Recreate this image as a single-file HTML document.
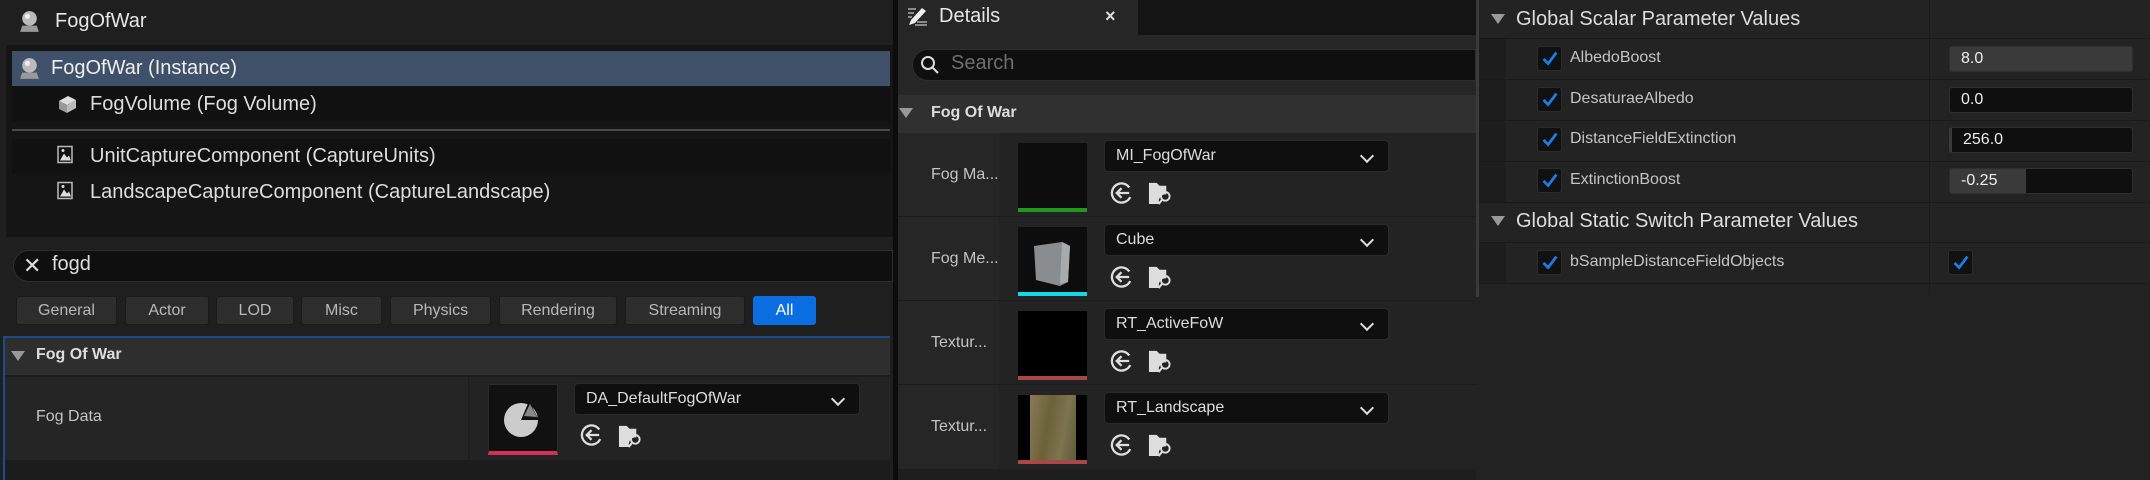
<!DOCTYPE html>
<html><head><meta charset="utf-8"><style>
*{margin:0;padding:0;box-sizing:border-box}
body{width:2150px;height:480px;overflow:hidden;background:#151515;font-family:"Liberation Sans",sans-serif;position:relative;color:#ccc}
.a{position:absolute}
.t{position:absolute;white-space:nowrap}
.btn{position:absolute;top:296px;height:29px;background:#2d2d2d;border:1px solid #1b1b1b;border-radius:3px;color:#b8b8b8;font-size:16px;line-height:27px;text-align:center}
.dd{position:absolute;background:#0f0f0f;border:1px solid #2a2a2a;border-radius:4px;height:32px;color:#ddd;font-size:16px;line-height:30px;padding-left:11px}
.chev{position:absolute;right:16px;top:10px;width:10px;height:10px;border-right:2px solid #ddd;border-bottom:2px solid #ddd;transform:rotate(45deg)}
.cb{position:absolute;width:25px;height:25px;background:#111;border:1px solid #2c2c2c;border-radius:3px}
.lbl{position:absolute;color:#c4c4c4;font-size:16px;white-space:nowrap}
.vb{position:absolute;left:1949px;width:184px;height:26px;background:#0f0f0f;border:1px solid #2f2f2f;border-radius:3px;color:#eee;font-size:16px;line-height:24px;padding-left:11px;overflow:hidden}
</style></head><body>
<svg width="0" height="0" style="position:absolute"><defs>
<symbol id="chk" viewBox="0 0 25 25"><path d="M6 13 L11 18 L20 6" fill="none" stroke="#1a7fe8" stroke-width="3"/></symbol>
<symbol id="arr" viewBox="0 0 24 24"><circle cx="12" cy="12" r="10" fill="none" stroke="#ddd" stroke-width="2.4" stroke-dasharray="52 11" transform="rotate(25 12 12)"/><path d="M20 12H7M12 7L7 12L12 17" fill="none" stroke="#ddd" stroke-width="2.4"/></symbol>
<symbol id="fold" viewBox="0 0 26 26"><path d="M1 3h8l3 3h7v9a7 7 0 0 0-7 10H1z" fill="#ddd"/><circle cx="18" cy="17" r="4.5" fill="none" stroke="#ddd" stroke-width="2"/><path d="M15 20l-4 5" stroke="#ddd" stroke-width="2.2"/></symbol>
<symbol id="pic" viewBox="0 0 16 18"><rect x="1" y="1" width="14" height="16" fill="none" stroke="#bbb" stroke-width="1.5"/><path d="M3 15L7 8L10 12L12 10L14 15Z" fill="#ddd"/><circle cx="6" cy="5" r="1.5" fill="#ddd"/></symbol>
<symbol id="ball" viewBox="0 0 24 24"><circle cx="12" cy="9" r="7" fill="#bbb"/><circle cx="10" cy="7" r="2.5" fill="#eee"/><path d="M3 22L5 16H19L21 22Z" fill="#999"/></symbol>
</defs></svg>

<!-- LEFT PANEL -->
<div class="a" style="left:0;top:0;width:893px;height:480px;background:#1f1f1f"></div>
<svg class="a" style="left:17px;top:9px" width="25" height="25"><use href="#ball"/></svg>
<div class="t" style="left:55px;top:10px;font-size:20px;color:#e6e6e6">FogOfWar</div>
<div class="a" style="left:6px;top:45px;width:887px;height:192px;background:#151515"></div>
<div class="a" style="left:12px;top:51px;width:878px;height:35px;background:#3f5168"></div>
<svg class="a" style="left:17px;top:56px" width="25" height="25"><use href="#ball"/></svg>
<div class="t" style="left:51px;top:57px;font-size:20px;color:#eee">FogOfWar (Instance)</div>
<div class="a" style="left:12px;top:87px;width:878px;height:35px;background:#111"></div>
<svg class="a" style="left:56px;top:93px" width="22" height="22" viewBox="0 0 22 22"><path d="M3 8L12 3L20 7L11 12Z" fill="#ddd"/><path d="M3 8L11 12V20L3 16Z" fill="#999"/><path d="M11 12L20 7V15L11 20Z" fill="#bbb"/></svg>
<div class="t" style="left:90px;top:93px;font-size:20px;color:#ddd">FogVolume (Fog Volume)</div>
<div class="a" style="left:12px;top:129px;width:878px;height:2px;background:#4a4a4a"></div>
<div class="a" style="left:12px;top:139px;width:878px;height:35px;background:#111"></div>
<svg class="a" style="left:57px;top:145px" width="16" height="19"><use href="#pic"/></svg>
<div class="t" style="left:90px;top:145px;font-size:20px;color:#ddd">UnitCaptureComponent (CaptureUnits)</div>
<svg class="a" style="left:57px;top:181px" width="16" height="19"><use href="#pic"/></svg>
<div class="t" style="left:90px;top:181px;font-size:20px;color:#ddd">LandscapeCaptureComponent (CaptureLandscape)</div>

<div class="a" style="left:13px;top:250px;width:880px;height:32px;background:#0f0f0f;border:1px solid #2e2e2e;border-radius:16px 0 0 16px"></div>
<div class="t" style="left:23px;top:253px;font-size:22px;color:#ddd">✕</div>
<div class="t" style="left:52px;top:253px;font-size:20px;color:#ddd">fogd</div>

<div class="btn" style="left:16px;width:101px">General</div>
<div class="btn" style="left:125px;width:84px">Actor</div>
<div class="btn" style="left:216px;width:78px">LOD</div>
<div class="btn" style="left:301px;width:81px">Misc</div>
<div class="btn" style="left:390px;width:101px">Physics</div>
<div class="btn" style="left:499px;width:118px">Rendering</div>
<div class="btn" style="left:625px;width:120px">Streaming</div>
<div class="btn" style="left:753px;width:63px;background:#0a6ee0;color:#fff;border-color:#0a6ee0">All</div>

<div class="a" style="left:3px;top:336px;width:887px;height:144px;border-left:2px solid #1c4d8a;border-top:2px solid #1c4d8a;background:#1c1c1c"></div>
<div class="a" style="left:5px;top:338px;width:885px;height:37px;background:#2e2e2e"></div>
<div class="a" style="left:11px;top:351px;width:0;height:0;border-left:7px solid transparent;border-right:7px solid transparent;border-top:10px solid #999"></div>
<div class="t" style="left:36px;top:346px;font-size:16px;font-weight:bold;color:#ddd">Fog Of War</div>
<div class="a" style="left:5px;top:377px;width:463px;height:83px;background:#252525"></div>
<div class="a" style="left:469px;top:377px;width:421px;height:83px;background:#232323"></div>
<div class="lbl" style="left:36px;top:408px">Fog Data</div>
<div class="a" style="left:488px;top:384px;width:70px;height:71px;background:#111;border:1px solid #2a2a2a;border-bottom:4px solid #d0305a"></div>
<svg class="a" style="left:501px;top:396px" width="44" height="44" viewBox="0 0 44 44"><circle cx="20" cy="24" r="17" fill="#ccc"/><path d="M20 24L28 5L38 24Z" fill="#111"/><path d="M23 20L29 8L36 21Z" fill="#888"/></svg>
<div class="dd" style="left:574px;top:383px;width:286px">DA_DefaultFogOfWar<div class="chev"></div></div>
<svg class="a" style="left:580px;top:423px" width="23" height="24"><use href="#arr"/></svg>
<svg class="a" style="left:618px;top:423px" width="25" height="25"><use href="#fold"/></svg>

<!-- MIDDLE PANEL -->
<div class="a" style="left:893px;top:0;width:5px;height:480px;background:#0c0c0c"></div>
<div class="a" style="left:898px;top:0;width:580px;height:480px;background:#222"></div>
<div class="a" style="left:1138px;top:0;width:340px;height:35px;background:#141414"></div>
<div class="a" style="left:898px;top:0;width:240px;height:35px;background:#262626"></div>
<svg class="a" style="left:905px;top:5px" width="24" height="24" viewBox="0 0 24 24"><path d="M3 4h8M3 8h6M3 12h4M10 20h12M12 17h10" stroke="#aaa" stroke-width="1.5"/><path d="M4 20L6 15L17 3L21 6L10 18Z" fill="#eee"/></svg>
<div class="t" style="left:939px;top:5px;font-size:20px;color:#e6e6e6">Details</div>
<div class="t" style="left:1105px;top:6px;font-size:18px;color:#ddd;font-weight:bold">×</div>
<div class="a" style="left:898px;top:35px;width:578px;height:434px;background:#262626"></div>
<div class="a" style="left:912px;top:49px;width:564px;height:32px;background:#0f0f0f;border:1px solid #2e2e2e;border-radius:16px 0 0 16px"></div>
<svg class="a" style="left:920px;top:55px" width="20" height="21" viewBox="0 0 20 21"><circle cx="8" cy="8" r="6" fill="none" stroke="#ddd" stroke-width="2"/><path d="M12.5 12.5L18 18" stroke="#ddd" stroke-width="2"/></svg>
<div class="t" style="left:951px;top:52px;font-size:20px;color:#6e6e6e">Search</div>
<div class="a" style="left:898px;top:95px;width:578px;height:38px;background:#303030"></div>
<div class="a" style="left:899px;top:108px;width:0;height:0;border-left:7px solid transparent;border-right:7px solid transparent;border-top:10px solid #999"></div>
<div class="t" style="left:931px;top:104px;font-size:16px;font-weight:bold;color:#ddd">Fog Of War</div>

<!-- rows -->
<div class="a" style="left:999px;top:133px;width:477px;height:336px;background:#232323"></div>
<div class="a" style="left:898px;top:216px;width:578px;height:1px;background:#1b1b1b"></div>
<div class="a" style="left:898px;top:300px;width:578px;height:1px;background:#1b1b1b"></div>
<div class="a" style="left:898px;top:384px;width:578px;height:1px;background:#1b1b1b"></div>
<div class="a" style="left:898px;top:469px;width:578px;height:11px;background:#1e1e1e"></div>

<div class="lbl" style="left:931px;top:166px">Fog Ma...</div>
<div class="a" style="left:1018px;top:143px;width:69px;height:69px;background:#0d0d0d;border-bottom:4px solid #1f9a1f"></div>
<div class="dd" style="left:1104px;top:140px;width:285px">MI_FogOfWar<div class="chev"></div></div>
<svg class="a" style="left:1110px;top:181px" width="23" height="24"><use href="#arr"/></svg>
<svg class="a" style="left:1148px;top:180px" width="25" height="25"><use href="#fold"/></svg>

<div class="lbl" style="left:931px;top:250px">Fog Me...</div>
<div class="a" style="left:1018px;top:227px;width:69px;height:69px;background:#0d0d0d;border-bottom:4px solid #14d8e8"></div>
<svg class="a" style="left:1030px;top:238px" width="46" height="48" viewBox="0 0 46 48"><path d="M4 8L32 4L40 8L38 44L30 48L6 42Z" fill="#8a8d90"/><path d="M32 4L40 8L38 44L30 46Z" fill="#a8abae"/></svg>
<div class="dd" style="left:1104px;top:224px;width:285px">Cube<div class="chev"></div></div>
<svg class="a" style="left:1110px;top:265px" width="23" height="24"><use href="#arr"/></svg>
<svg class="a" style="left:1148px;top:264px" width="25" height="25"><use href="#fold"/></svg>

<div class="lbl" style="left:931px;top:334px">Textur...</div>
<div class="a" style="left:1018px;top:311px;width:69px;height:69px;background:#000;border-bottom:4px solid #a84848"></div>
<div class="dd" style="left:1104px;top:308px;width:285px">RT_ActiveFoW<div class="chev"></div></div>
<svg class="a" style="left:1110px;top:349px" width="23" height="24"><use href="#arr"/></svg>
<svg class="a" style="left:1148px;top:348px" width="25" height="25"><use href="#fold"/></svg>

<div class="lbl" style="left:931px;top:418px">Textur...</div>
<div class="a" style="left:1018px;top:395px;width:69px;height:69px;background:#000;border-bottom:4px solid #a84848"></div>
<div class="a" style="left:1030px;top:395px;width:46px;height:65px;background:linear-gradient(100deg,#8a7a5a,#6b6238 40%,#7d7450 70%,#5e5a3a)"></div>
<div class="dd" style="left:1104px;top:392px;width:285px">RT_Landscape<div class="chev"></div></div>
<svg class="a" style="left:1110px;top:433px" width="23" height="24"><use href="#arr"/></svg>
<svg class="a" style="left:1148px;top:432px" width="25" height="25"><use href="#fold"/></svg>

<!-- RIGHT PANEL -->
<div class="a" style="left:1476px;top:0;width:674px;height:480px;background:#222"></div>
<div class="a" style="left:1476px;top:0;width:3px;height:297px;background:#3a3a3a"></div>
<div class="a" style="left:1479px;top:0;width:671px;height:283px;background:#232323"></div>
<div class="a" style="left:1929px;top:0;width:1px;height:297px;background:#1b1b1b"></div>
<div class="a" style="left:1491px;top:14px;width:0;height:0;border-left:7px solid transparent;border-right:7px solid transparent;border-top:10px solid #999"></div>
<div class="t" style="left:1516px;top:8px;font-size:20px;color:#ddd">Global Scalar Parameter Values</div>
<div class="a" style="left:1479px;top:38px;width:671px;height:1px;background:#191919"></div>
<div class="a" style="left:1479px;top:39px;width:27px;height:163px;background:#1d1d1d"></div>
<div class="a" style="left:1479px;top:79px;width:671px;height:1px;background:#191919"></div>
<div class="a" style="left:1479px;top:120px;width:671px;height:1px;background:#191919"></div>
<div class="a" style="left:1479px;top:161px;width:671px;height:1px;background:#191919"></div>
<div class="a" style="left:1479px;top:202px;width:671px;height:1px;background:#191919"></div>

<svg class="cb" style="left:1537px;top:46px"><use href="#chk"/></svg>
<div class="lbl" style="left:1570px;top:49px">AlbedoBoost</div>
<div class="vb" style="top:46px;background:#3a3a3a">8.0</div>
<svg class="cb" style="left:1537px;top:87px"><use href="#chk"/></svg>
<div class="lbl" style="left:1570px;top:90px">DesaturaeAlbedo</div>
<div class="vb" style="top:87px">0.0</div>
<svg class="cb" style="left:1537px;top:127px"><use href="#chk"/></svg>
<div class="lbl" style="left:1570px;top:130px">DistanceFieldExtinction</div>
<div class="vb" style="top:127px;border-left:3px solid #3a3a3a">256.0</div>
<svg class="cb" style="left:1537px;top:168px"><use href="#chk"/></svg>
<div class="lbl" style="left:1570px;top:171px">ExtinctionBoost</div>
<div class="vb" style="top:168px;background:linear-gradient(90deg,#3a3a3a 76px,#0f0f0f 76px)">-0.25</div>

<div class="a" style="left:1491px;top:216px;width:0;height:0;border-left:7px solid transparent;border-right:7px solid transparent;border-top:10px solid #999"></div>
<div class="t" style="left:1516px;top:210px;font-size:20px;color:#ddd">Global Static Switch Parameter Values</div>
<div class="a" style="left:1479px;top:242px;width:671px;height:1px;background:#191919"></div>
<div class="a" style="left:1479px;top:243px;width:27px;height:40px;background:#1d1d1d"></div>
<svg class="cb" style="left:1537px;top:250px"><use href="#chk"/></svg>
<div class="lbl" style="left:1570px;top:253px">bSampleDistanceFieldObjects</div>
<svg class="cb" style="left:1948px;top:250px"><use href="#chk"/></svg>
<div class="a" style="left:1479px;top:283px;width:671px;height:1px;background:#191919"></div>
</body></html>
